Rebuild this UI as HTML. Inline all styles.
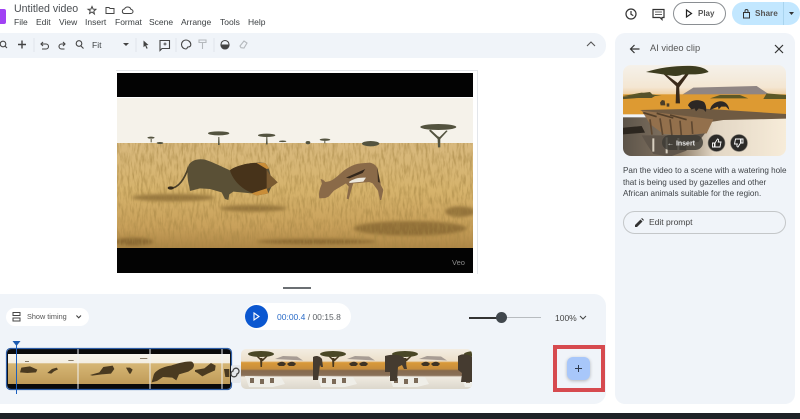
<!DOCTYPE html>
<html><head><meta charset="utf-8"><style>
*{box-sizing:border-box}
html,body{margin:0;padding:0;width:800px;height:419px;overflow:hidden;background:#fff;font-family:"Liberation Sans",sans-serif;color:#444746}
.a{position:absolute}
.m{position:absolute;top:17px;font-size:8.5px;color:#3c4043}
svg{position:absolute;overflow:visible}
#r{filter:blur(.3px)}
</style></head><body>
<div id="r" class="a" style="left:0;top:0;width:800px;height:419px;overflow:hidden">
<div class="a" style="left:0;top:9px;width:6px;height:15px;background:#a142f4;border-radius:0 2px 2px 0"></div>
<div class="a" style="left:14px;top:3px;font-size:10.6px;color:#4a4e52">Untitled video</div>
<svg style="left:88px;top:5px" width="50" height="12" fill="none" stroke="#444" stroke-width="1"><path d="M4 1.5l1.100 2.600 2.800.2-2.100 1.900.6 2.800L4 7l-2.400 1.500.6-2.800L.1 4.300l2.800-.2z"/><path d="M18 2.500h3l1 1h4v5h-8z"/><path d="M36 8.500h7a2 2 0 0 0 0-4 3.500 3.500 0 0 0-6.500-.5 2.300 2.300 0 0 0-.5 4.500z"/></svg>
<div class="m" style="left:14px">File</div><div class="m" style="left:36px">Edit</div><div class="m" style="left:59px">View</div><div class="m" style="left:85px">Insert</div><div class="m" style="left:115px">Format</div><div class="m" style="left:149px">Scene</div><div class="m" style="left:181px">Arrange</div><div class="m" style="left:220px">Tools</div><div class="m" style="left:248px">Help</div>

<div class="a" style="left:-20px;top:33px;width:626px;height:25px;background:#f0f4f9;border-radius:12px"></div>
<svg style="left:0;top:33px" width="260" height="25" fill="none" stroke="#444" stroke-width="1.100">
<circle cx="3" cy="11" r="2.800"/><path d="M5 13l2 2"/>
<path d="M22 7.500v8M18 11.500h8" stroke-width="1.400"/>
<path d="M34 5v14M136 5v14M176 5v14M214 5v14" stroke="#dde1e6" stroke-width=".8"/>
<path d="M41 11h5a2.500 2.500 0 0 1 0 5h-4M43 9l-2 2 2 2"/>
<path d="M65 11h-3.500a2.500 2.500 0 0 0 0 5h3M63 9l2 2-2 2"/>
<circle cx="79" cy="10.500" r="2.800"/><path d="M81 13l2.500 2.500"/>
<path d="M143.500 7.500l5 4.500-2.300.3 1.500 3-1.200.5-1.300-3-1.700 1.500z" fill="#444" stroke="none"/>
<path d="M160 7.500h9.500v8h-7.500l-2 2z"/><path d="M165 9.500v3M163.500 11h3" stroke-width=".9"/>
<path d="M186 7a4.500 4.500 0 1 0 0 9c1.500 0 .8-1.500 1.800-2 1.500 0 3-.6 3-2.500 0-2.500-2.500-4.500-4.800-4.500z"/>
<path d="M199 7h7v2.500h-7zM202.500 10v6" stroke="#b5b9bd"/>
<circle cx="225" cy="11.500" r="4"/><path d="M221 12a4 4 0 0 0 8 0z" fill="#444"/>
<path d="M240 13l4-5 3 2-3 5-3-.3z" stroke="#b5b9bd"/>
</svg>
<div class="a" style="left:92px;top:40px;font-size:8.500px;color:#3c4043">Fit</div>
<svg style="left:123px;top:43px" width="6" height="4"><path d="M0 0h6L3 3z" fill="#444"/></svg>
<svg style="left:586px;top:41px" width="10" height="7" fill="none" stroke="#555" stroke-width="1.100"><path d="M1 5l4-4 4 4"/></svg>

<div class="a" style="left:116px;top:70px;width:362px;height:204px;border:1px solid #e3e6ea;border-left:0;border-bottom:0"></div>
<div class="a" style="left:117px;top:73px;width:356px;height:24px;background:#030303"></div>
<div class="a" style="left:117px;top:248px;width:356px;height:25px;background:#030303"></div>
<svg style="left:117px;top:98px;overflow:hidden" width="356" height="150" viewBox="0 0 356 150">
<defs><linearGradient id="g" x1="0" y1="0" x2="0" y2="1"><stop offset="0" stop-color="#d8b97e"/><stop offset=".45" stop-color="#d6b36c"/><stop offset=".8" stop-color="#c8a05a"/><stop offset="1" stop-color="#ad8646"/></linearGradient>
<filter id="n" x="0" y="0" width="100%" height="100%"><feTurbulence type="fractalNoise" baseFrequency=".45 .09" numOctaves="3" seed="7"/><feColorMatrix values="0 0 0 0 .38 0 0 0 0 .24 0 0 0 0 .06 2.400 0 0 0 -1"/></filter>
<filter id="b"><feGaussianBlur stdDeviation="5"/></filter></defs>
<rect width="356" height="46" fill="#f5f2ea"/>
<rect y="45" width="356" height="105" fill="url(#g)"/>
<g transform="translate(-7,-33) scale(.3333)">
<g fill="#6e5120" opacity=".6" filter="url(#b)"><ellipse cx="190" cy="398" rx="125" ry="11"/><ellipse cx="430" cy="430" rx="100" ry="10"/><ellipse cx="900" cy="490" rx="170" ry="22"/><ellipse cx="70" cy="530" rx="60" ry="12"/><ellipse cx="1050" cy="440" rx="45" ry="16"/><ellipse cx="620" cy="530" rx="180" ry="8"/></g>
</g>
<rect y="45" width="356" height="105" filter="url(#n)" opacity=".65"/>
<g transform="translate(-7,-33) scale(.3333)">
<g fill="#53533f">
<path d="M324 240h5l-1-24h-3z"/><ellipse cx="326" cy="205" rx="32" ry="6"/>
<path d="M468 238h5l-1-22h-3z"/><ellipse cx="470" cy="211" rx="26" ry="5"/>
<path d="M122 232h3v-10h-3z"/><ellipse cx="123" cy="218" rx="11" ry="3"/>
<path d="M643 235h3v-8h-3z"/><ellipse cx="645" cy="224" rx="16" ry="3.500"/>
<ellipse cx="782" cy="236" rx="26" ry="8"/><ellipse cx="518" cy="229" rx="11" ry="2.500"/><ellipse cx="594" cy="233" rx="7" ry="5"/><ellipse cx="150" cy="234" rx="10" ry="3"/>
<path d="M984 247h7v-25l22-24-4-2-20 20-5-2-22-20-5 3 26 25z"/><ellipse cx="985" cy="186" rx="54" ry="9"/>
</g>
<path d="M178 370C205 372 225 340 236 305" fill="none" stroke="#4a3f28" stroke-width="5"/><ellipse cx="182" cy="369" rx="9" ry="5" fill="#33291a"/>
<path d="M236 300C245 285 265 280 285 284C310 292 335 305 360 316C380 300 430 290 465 294C478 305 480 325 482 332L503 352L484 366L475 385L440 392L425 385L370 380L358 388L355 405L345 402L335 382L300 372L270 370L240 378L238 365C232 345 230 320 236 300z" fill="#5a5036"/>
<path d="M360 316C380 300 430 290 465 294C470 310 470 330 478 345L470 375L430 385C400 375 370 350 360 316z" fill="#47331a"/>
<path d="M470 315L482 332L503 352L484 366L470 372z" fill="#7a5a30"/>
<path d="M425 385L470 370L475 385L440 392zM440 294L465 294L478 310L470 312z" fill="#c98d38"/>
<path d="M628 400c-3-16 2-32 8-44l-4-14 8 3 6 6 10-2c12-2 22-12 34-22 14-14 36-29 62-32l28-2c16 4 24 14 24 28l8 32c-2 8 6 14 8 22l-6 30-4 0-6-28-16-22-10-4-48 4-4 12-10 36-6-2 6-36-8-10-36 22-16 18-10 4z" fill="#8a6a48"/>
<path d="M718 350c20-12 30-12 50-12l-8 12-42 4z" fill="#ede8dc"/><path d="M708 338l58-26-8 12-40 16z" fill="#33261a"/>
<path d="M802 305l8 48-6-2z" fill="#3b2e1f"/>
</g>
</svg>
<div class="a" style="left:452px;top:258px;font-size:7.500px;color:#8a8a8a">Veo</div>
<div class="a" style="left:283px;top:287px;width:28px;height:1.500px;background:#6b6f73"></div>

<div class="a" style="left:-20px;top:294px;width:626px;height:110px;background:#f0f4f9;border-radius:12px"></div>
<div class="a" style="left:6px;top:308px;width:83px;height:18px;background:#fff;border-radius:9px"></div>
<svg style="left:11px;top:311px" width="75" height="12" fill="none" stroke="#444" stroke-width="1"><path d="M2 1.500h7v3H2zM2 7h7v3H2z"/><path d="M70 4.500l-2.300 2.300-2.300-2.300" stroke-width="1.100"/></svg>
<div class="a" style="left:27px;top:312px;font-size:7.300px;color:#555">Show timing</div>
<div class="a" style="left:245px;top:303px;width:106px;height:27px;background:#fff;border-radius:14px"></div>
<div class="a" style="left:245px;top:305px;width:23px;height:23px;background:#0b57d0;border-radius:50%"></div>
<svg style="left:253px;top:312px" width="8" height="9" fill="none" stroke="#fff" stroke-width="1.100"><path d="M1 1l5 3.500L1 8z"/></svg>
<div class="a" style="left:277px;top:312px;font-size:8.500px;color:#5f6368"><span style="color:#2a6bc7">00:00.4</span> / 00:15.8</div>
<div class="a" style="left:469px;top:317px;width:33px;height:1.500px;background:#333"></div>
<div class="a" style="left:502px;top:317px;width:39px;height:1px;background:#b8bcc0"></div>
<div class="a" style="left:496px;top:312px;width:11px;height:11px;background:#41474d;border-radius:50%"></div>
<div class="a" style="left:555px;top:313px;font-size:8.500px;color:#444">100%</div>
<svg style="left:579px;top:315px" width="8" height="6" fill="none" stroke="#444"><path d="M1 1l3 3 3-3"/></svg>

<svg style="left:0;top:336px" width="480" height="60" viewBox="0 0 480 60">
<defs><linearGradient id="l" x1="0" y1="0" x2="0" y2="1"><stop offset="0" stop-color="#f7f4ec"/><stop offset=".3" stop-color="#f3eee2"/><stop offset=".32" stop-color="#d6b675"/><stop offset="1" stop-color="#bf9b58"/></linearGradient>
<linearGradient id="w" x1="0" y1="0" x2="0" y2="1"><stop offset="0" stop-color="#f3ede2"/><stop offset=".3" stop-color="#ecdfca"/><stop offset=".34" stop-color="#d99a3a"/><stop offset=".5" stop-color="#c78d3c"/><stop offset=".54" stop-color="#866a4e"/><stop offset=".66" stop-color="#8a7058"/><stop offset=".7" stop-color="#efeae0"/><stop offset="1" stop-color="#dcd7cc"/></linearGradient>
<g id="fr"><rect width="72" height="40" fill="url(#w)"/>
<path d="M4 27l36 1 4 7-12 3H8z" fill="#efeee8"/><path d="M9 29h4v5H9zM19 30h4v5h-4zM29 29h4v5h-4z" fill="#7b6a58"/>
<path d="M19 9h2.500l-.5 9h-1.500zM20 12l-6-6 1-.5 6 5 6-5 1 .5-6 6z" fill="#47381f"/><ellipse cx="20" cy="5" rx="13" ry="3" fill="#4a4726"/>
<path d="M34 10l8-3 14 .5 6 4z" fill="#a79c94"/><path d="M36 15c3-3 7-3 9 0l-2 2-5 0zM46 15c3-3 7-3 9 0l-2 2-5 0z" fill="#3f3424"/></g></defs>
<rect x="7" y="13" width="224" height="40" rx="4" fill="#0a0a0a"/>
<rect x="8" y="18" width="222" height="30" fill="url(#l)"/>
<g transform="translate(0,-41) scale(.3333)" fill="#4a3a20">
<path d="M60 232l4-14 26-4 22 10-4 8-26 2zM142 234l14-12 14-4 4 5-12 6-8 7zM205 196h16v2h-16zM75 198h12v2H75z"/>
<path d="M270 240l28-8 12-16 28-4 5 10-10 14-28 2-28 4zM378 218h12l8 6-6 12h-4zM420 190h22v2h-22z"/>
<path d="M455 262l6-22c6-16 34-26 52-28 18-6 44-14 62-12 10 6 8 16 2 22l-12 8-28 8-8 18-12-8-28-2-18 12z"/>
<path d="M585 225l28-5 20-16 14 8-2 14-22 10-16 8-14-10-8-4zM672 222h16v24h-12z"/>
</g>
<path d="M78 13v40M150 13v40M222 13v40" stroke="#f1f3f4" stroke-width="1"/>
<rect x="6.500" y="12.500" width="225" height="41" rx="4" fill="none" stroke="#2f5fa8" stroke-width="1.200"/>
<path d="M16.500 8v50" stroke="#1a5fbf" stroke-width="1"/><path d="M12.500 5h8l-4 5z" fill="#1c5bb0"/>
<rect x="231" y="29" width="10" height="18" fill="#e4e7eb" rx="2"/><path d="M233 35a3 3 0 1 1 4 3 3 3 0 1 1-4-3z" fill="none" stroke="#444" stroke-width="1.300"/>
<clipPath id="cw"><rect x="241" y="13" width="231" height="40" rx="5"/></clipPath>
<g clip-path="url(#cw)">
<use href="#fr" x="241" y="13"/><use href="#fr" x="313" y="13"/><use href="#fr" x="385" y="13"/><use href="#fr" x="457" y="13"/>
<g fill="#453b30"><path d="M313 21c3-2 7-1 9 2l1 8h-2l-1-2-2 15h-5z"/><path d="M385 20c6-2 16-2 20 3l2 10h-3l-2-4-4 2-1 14h-7v-9h-5z"/><path d="M458 20c5-3 10-2 14 1v25h-11l1-9-4-3z"/></g>
</g>
</svg>

<div class="a" style="left:553px;top:345px;width:52px;height:47px;border:4px solid #d64a4f"></div>
<div class="a" style="left:567px;top:357px;width:23px;height:23px;background:#a8c7fa;border-radius:6px;box-shadow:0 1px 3px rgba(60,64,67,.35)"></div>
<svg style="left:574px;top:364px" width="9" height="9" stroke="#2d3a4f" stroke-width="1"><path d="M4.500 1v7M1 4.500h7"/></svg>

<div class="a" style="left:0;top:404px;width:800px;height:9px;background:#fff"></div>
<div class="a" style="left:0;top:413px;width:800px;height:6px;background:#1e2227"></div>

<svg style="left:624px;top:7px" width="42" height="14" fill="none" stroke="#333" stroke-width="1.200"><circle cx="7" cy="7" r="5"/><path d="M7 4v3.300l2.300 1.300"/><path d="M29 2.500h11v8h-2l0 2-2-2h-7z"/><path d="M31 5h7M31 7.500h7" stroke-width=".8"/></svg>
<div class="a" style="left:673px;top:2px;width:53px;height:23px;border:1px solid #8a8e92;border-radius:12px;background:#fff"></div>
<svg style="left:685px;top:9px" width="8" height="9" fill="none" stroke="#222" stroke-width="1.200"><path d="M1.500 1l5 3.500-5 3.500z"/></svg>
<div class="a" style="left:698px;top:9px;font-size:8px;font-weight:bold;color:#555">Play</div>
<div class="a" style="left:732px;top:2px;width:68px;height:23px;background:#c2e7ff;border-radius:12px"></div>
<div class="a" style="left:783px;top:2px;width:1px;height:23px;background:#a9d4ee"></div>
<svg style="left:742px;top:8px" width="9" height="11" fill="none" stroke="#333" stroke-width="1"><rect x="1.500" y="4.500" width="6" height="5.500"/><path d="M3 4.500V3a1.500 1.500 0 0 1 3 0v1.500"/></svg>
<div class="a" style="left:755px;top:9px;font-size:8.200px;font-weight:bold;color:#555">Share</div>
<svg style="left:789px;top:12px" width="6" height="4"><path d="M0 0h5L2.500 3z" fill="#333"/></svg>

<div class="a" style="left:615px;top:33px;width:180px;height:371px;background:#f0f4f9;border-radius:10px"></div>
<svg style="left:629px;top:43px" width="12" height="12" fill="none" stroke="#333" stroke-width="1.200"><path d="M10.500 6H1.500M5.500 2l-4 4 4 4"/></svg>
<div class="a" style="left:650px;top:43px;font-size:9.300px;color:#555">AI video clip</div>
<svg style="left:774px;top:44px" width="10" height="10" stroke="#333" stroke-width="1.200"><path d="M1 1l8 8M9 1l-8 8"/></svg>

<svg style="left:623px;top:65px" width="163" height="92" viewBox="0 0 163 92">
<defs><clipPath id="c"><rect width="163" height="91" rx="8"/></clipPath>
<linearGradient id="s" x1="0" y1="0" x2="0" y2="1"><stop offset="0" stop-color="#f5f1ea"/><stop offset=".7" stop-color="#f4e6d2"/><stop offset="1" stop-color="#ecc893"/></linearGradient>
<linearGradient id="t" x1="0" y1="0" x2="1" y2="0"><stop offset="0" stop-color="#5a5248"/><stop offset=".35" stop-color="#8a7a66"/><stop offset=".55" stop-color="#e2d6c4"/><stop offset="1" stop-color="#f8edda"/></linearGradient></defs>
<g clip-path="url(#c)">
<rect width="163" height="32" fill="url(#s)"/>
<g transform="translate(-13,-5) scale(.3333)">
<path d="M215 105l35-22 190-5 40 27z" fill="#8f8583"/>
<rect x="30" y="103" width="510" height="60" fill="#dd9a32"/>
<path d="M40 108l55-10 60 10zM330 105h60l25 10H300zM470 100l60 5v12h-70z" fill="#5d5826"/>
<rect x="30" y="172" width="510" height="125" fill="url(#t)"/>
<path d="M90 150l190-4 250 16v14l-190 4-50 8-110 0z" fill="#6f5a42"/>
<path d="M95 152l215 26-20 42-60 6-70-4-40-30z" fill="#93704c"/>
<path d="M120 178l6 46M150 175l8 50M180 178l6 50M210 182l4 44M245 184l3 38" stroke="#5e4730" stroke-width="5" fill="none"/>
<path d="M100 158l40 12M140 160l50 14M180 165l50 14" stroke="#54402a" stroke-width="5" fill="none"/>
<path d="M30 204l65-6 10 20-75 6z" fill="#2c261f"/>
<path d="M95 226l60 0 70 0 60-6-20 26-40 4 5 22-50 18-50-8-20-30z" fill="#5f554a"/>
<path d="M130 235v40M170 232v48M205 234v36" stroke="#d8cfc0" stroke-width="6" fill="none"/>
<path d="M197 130h13l-3-60h-8z" fill="#3a2a1a"/>
<path d="M200 80l-40-38 5-1 38 28 30-34 7 2-33 46z" fill="#3a2a1a"/>
<path d="M108 36c40-14 100-20 140-18 25 2 40 8 48 18-30 10-50 6-80 8-20 10-50-2-108-8z" fill="#3d3c1f"/>
<path d="M234 136c6-16 30-20 48-10 6 8 8 18 6 30l-8-8-14-2-8 8-4-8-10 2zM300 150c2-14 14-24 28-26 16-2 28 8 30 26l-10-10-14 0-8 8-2-8z" fill="#2c2724"/>
<path d="M30 110l55-4 50 2-10 6-40 0-55 4zM85 100l35-4 10 10-30 4z" fill="#57522a"/>
<path d="M150 128l6-8 8 2 2 14h-14zM170 130h8v10h-8z" fill="#4a3d28"/>
</g>
</g>
<rect x="39" y="70" width="41" height="15" rx="7.500" fill="#3d3a35" opacity=".82"/>
<circle cx="93.500" cy="78" r="8.500" fill="#2b2a28" stroke="#8a847a" stroke-width=".6"/><circle cx="116" cy="78" r="8.500" fill="#2b2a28" stroke="#8a847a" stroke-width=".6"/>
<path d="M89.500 78h2v4h-2zM92 78l2.500-4c1 0 1.300.8 1 2l-.3 1h2.800l-1 5h-5z" fill="none" stroke="#fff" stroke-width=".9"/>
<path d="M120 78h-2v-4h2zM117.500 78l-2.500 4c-1 0-1.300-.8-1-2l.3-1h-2.800l1-5h5z" fill="none" stroke="#fff" stroke-width=".9"/>
<text x="44" y="80.500" font-family="Liberation Sans" font-size="7" font-weight="bold" fill="#eee">← Insert</text>
</svg>

<div class="a" style="left:623px;top:165px;width:170px;font-size:8.150px;line-height:11.700px;color:#3f4347;white-space:nowrap">Pan the video to a scene with a watering hole<br>that is being used by gazelles and other<br>African animals suitable for the region.</div>
<div class="a" style="left:623px;top:211px;width:163px;height:23px;border:1px solid #c4c7c9;border-radius:12px"></div>
<svg style="left:635px;top:218px" width="9" height="9"><path d="M0 9V7l5.500-5.500 2 2L2 9zM6.200.8L7 0l2 2-.8.8z" fill="#333"/></svg>
<div class="a" style="left:649px;top:217px;font-size:8.500px;color:#444">Edit prompt</div>
</div>
</body></html>
